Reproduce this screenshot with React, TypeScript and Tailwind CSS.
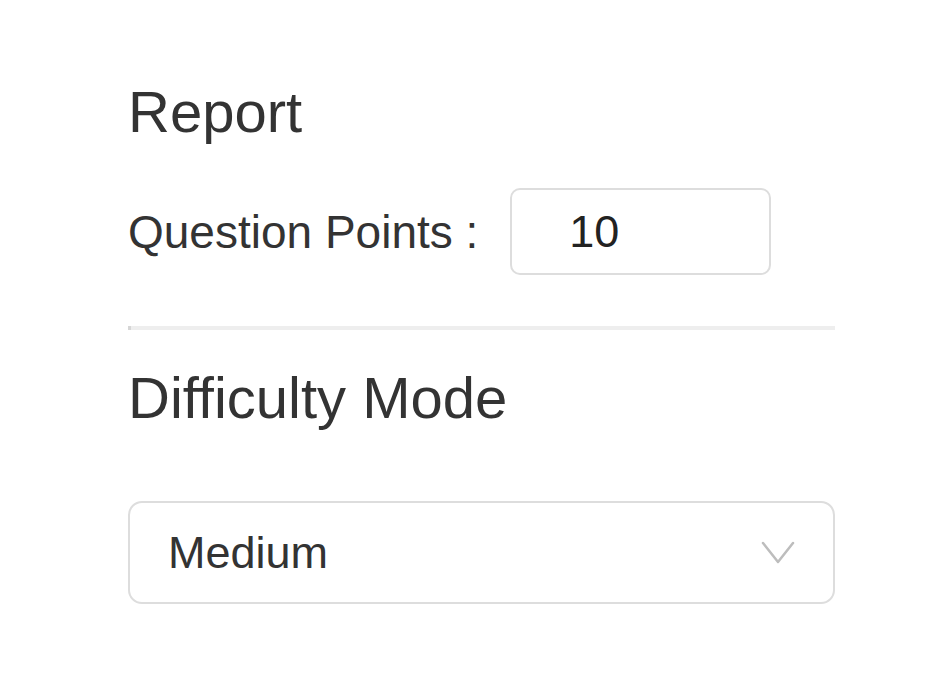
import React from 'react';

const ChevronDown: React.FC = () => (
  <svg width="34" height="26" viewBox="0 0 34 26" fill="none" className="shrink-0">
    <polyline points="2,3 17,22 32,3" stroke="#bdbdbd" strokeWidth="2.5" strokeLinecap="round" strokeLinejoin="round" />
  </svg>
);

const App: React.FC = () => {
  return (
    <div className="min-h-screen bg-white font-['Liberation_Sans',Arial,sans-serif] text-[#333]">
      <div className="pl-[128px] pt-[83px] w-[835px]">
        {/* Report */}
        <h2 className="text-[58px] leading-none font-normal">Report</h2>
        <div className="mt-[47px] flex items-center">
          <span className="text-[46px] leading-none">Question Points :</span>
          <div className="ml-[32px] w-[261px] h-[87px] border-2 border-[#dddddd] rounded-[10px] flex items-center pl-[57px]">
            <span className="text-[45px] leading-none text-[#222]">10</span>
          </div>
        </div>

        <div className="mt-[51px] h-[4px] bg-[#eeeeee] flex">
          <div className="w-[3px] h-full bg-[#d6d6d6]" />
        </div>

        {/* Difficulty */}
        <h2 className="mt-[39px] text-[58px] leading-none font-normal">Difficulty Mode</h2>
        <div className="mt-[74px] h-[103px] border-2 border-[#dddddd] rounded-[14px] flex items-center justify-between pl-[38px] pr-[38px]">
          <span className="text-[45px] leading-none">Medium</span>
          <ChevronDown />
        </div>
      </div>
    </div>
  );
};

export default App;
